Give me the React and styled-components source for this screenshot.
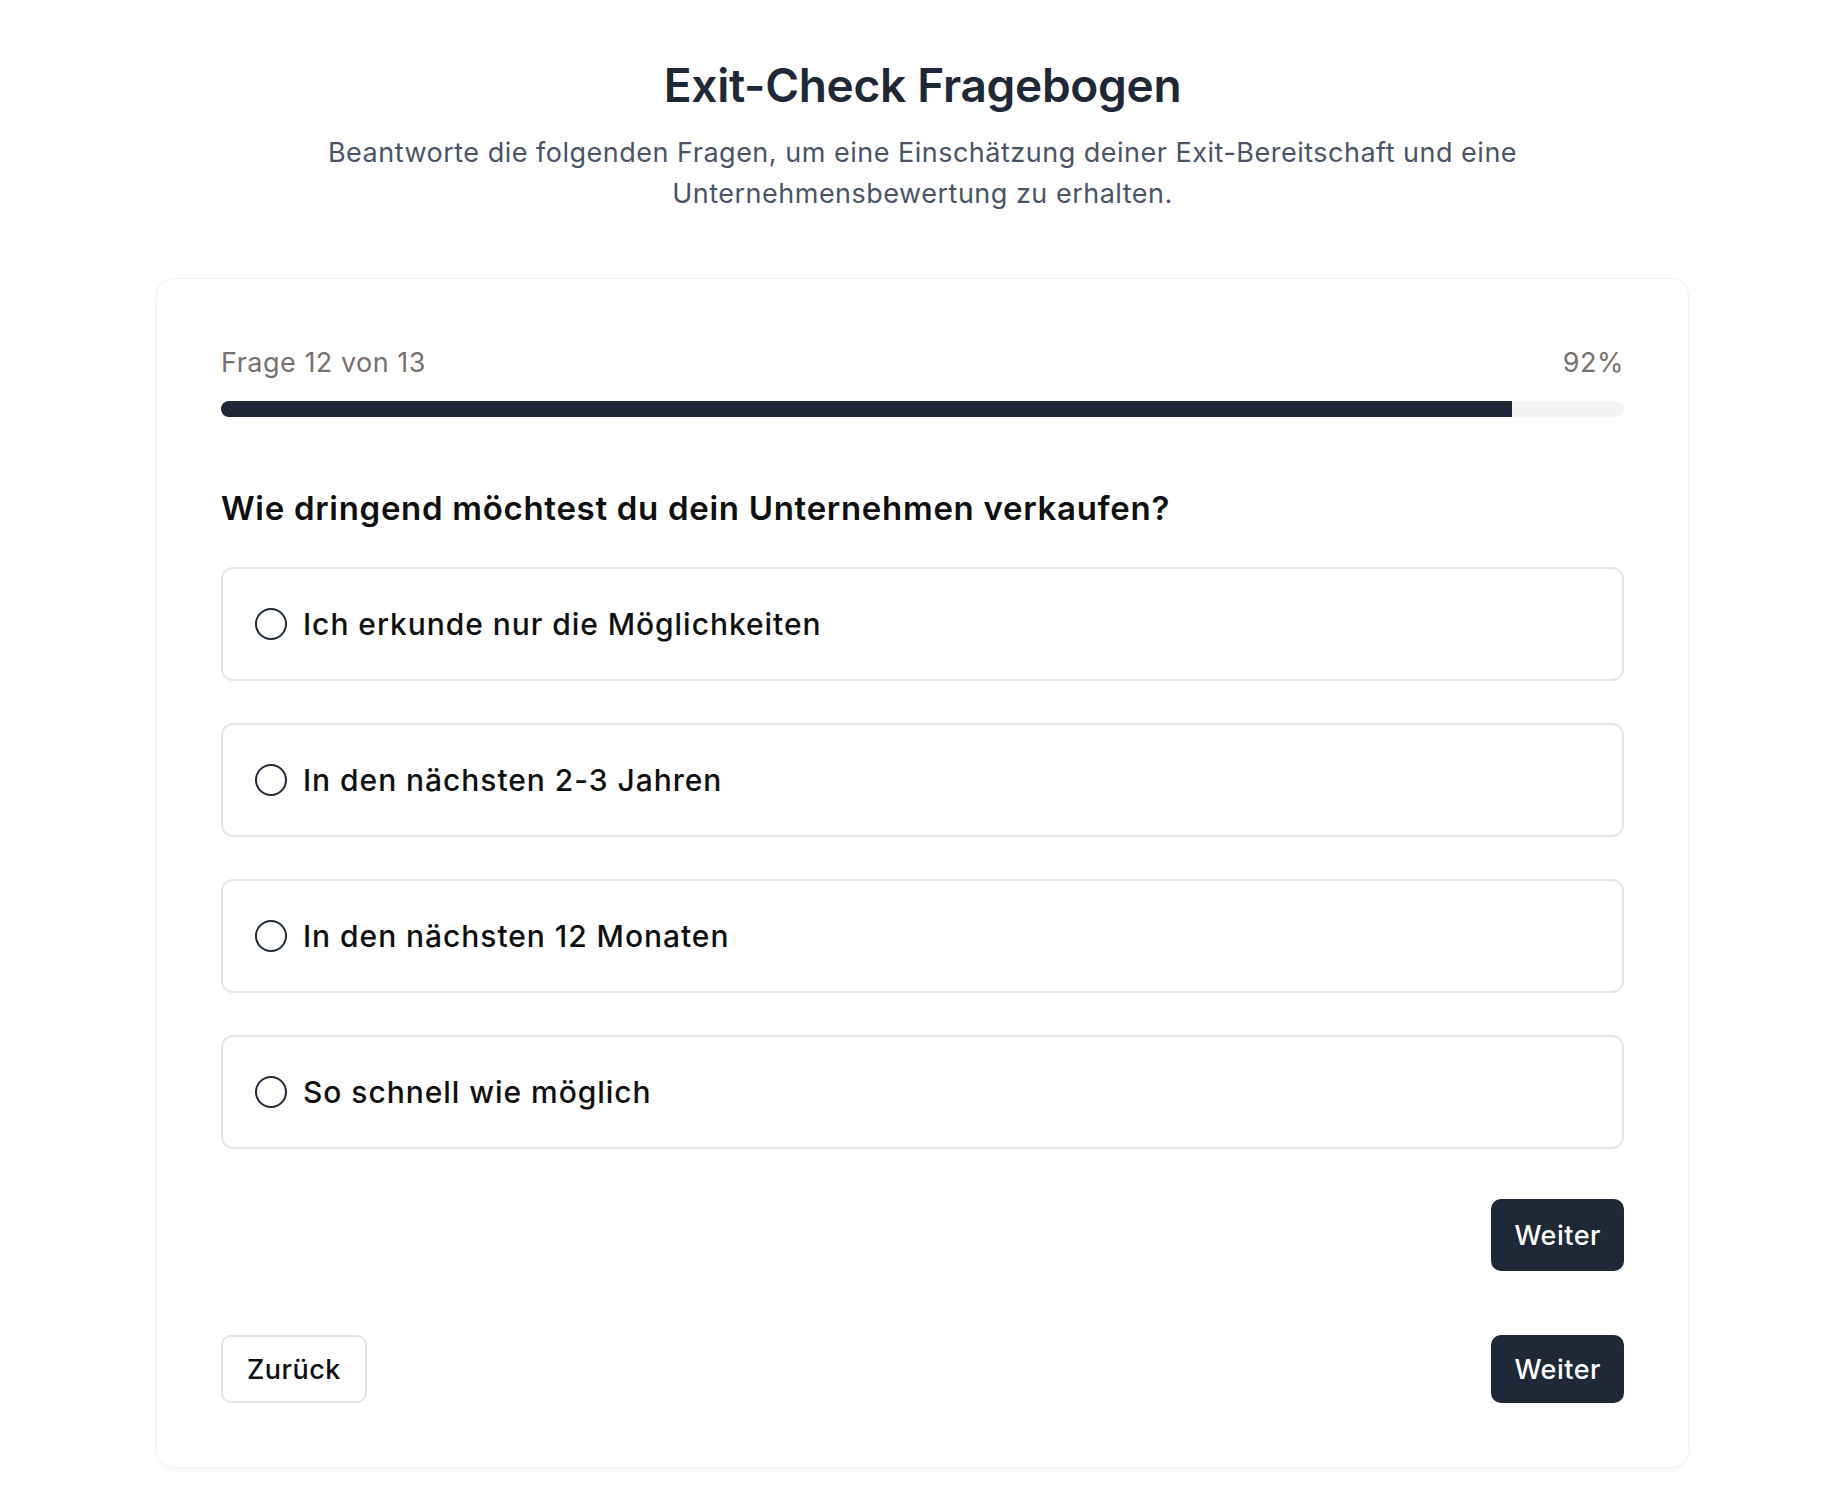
import React, { useState } from 'react';
import styled, { createGlobalStyle } from 'styled-components';

const GlobalStyle = createGlobalStyle`
  * { box-sizing: border-box; }
  body {
    margin: 0;
    background: #ffffff;
    font-family: Inter, "Noto Sans", "Liberation Sans", sans-serif;
    color: #0f0f0f;
  }
`;

const options = [
  'Ich erkunde nur die Möglichkeiten',
  'In den nächsten 2-3 Jahren',
  'In den nächsten 12 Monaten',
  'So schnell wie möglich',
];

const App = () => {
  const [selected, setSelected] = useState(null);
  const current = 12;
  const total = 13;
  const percent = Math.round((current / total) * 100);

  return (
    <Page>
      <GlobalStyle />
      <Header>
        <Title>Exit-Check Fragebogen</Title>
        <Subtitle>
          Beantworte die folgenden Fragen, um eine Einschätzung deiner Exit-Bereitschaft und eine
          <br />
          Unternehmensbewertung zu erhalten.
        </Subtitle>
      </Header>

      <Card>
        <ProgressInfo>
          <span>Frage {current} von {total}</span>
          <span>{percent}%</span>
        </ProgressInfo>
        <Track>
          <Fill style={{ width: `${percent}%` }} />
        </Track>

        <Question>Wie dringend möchtest du dein Unternehmen verkaufen?</Question>

        <OptionList>
          {options.map((opt, i) => (
            <Option key={opt} onClick={() => setSelected(i)}>
              <Radio $checked={selected === i} />
              <OptionText>{opt}</OptionText>
            </Option>
          ))}
        </OptionList>

        <InlineActions>
          <Button $primary $tall>Weiter</Button>
        </InlineActions>

        <Footer>
          <Button>Zurück</Button>
          <Button $primary>Weiter</Button>
        </Footer>
      </Card>
    </Page>
  );
};

const Page = styled.main`
  padding: 56px 133px 36px 156px;
`;

const Header = styled.header`
  text-align: center;
  margin-bottom: 64px;
`;

const Title = styled.h1`
  margin: 0 0 18px;
  font-size: 46px;
  line-height: 58px;
  font-weight: 600;
  color: #1e2837;
  letter-spacing: -0.3px;
`;

const Subtitle = styled.p`
  margin: 0;
  font-size: 27px;
  line-height: 41px;
  letter-spacing: 0.5px;
  color: #4a5468;
`;

const Card = styled.section`
  background: #fff;
  border: 1.5px solid #eef1f6;
  border-radius: 18px;
  box-shadow: 0 2px 4px rgba(15, 23, 42, 0.04);
  padding: 64px;
`;

const ProgressInfo = styled.div`
  display: flex;
  justify-content: space-between;
  align-items: center;
  font-size: 27px;
  line-height: 40px;
  letter-spacing: 0.5px;
  color: #78716c;
  margin-bottom: 18px;
`;

const Track = styled.div`
  height: 16px;
  border-radius: 999px;
  background: #f4f4f3;
  overflow: hidden;
`;

const Fill = styled.div`
  height: 100%;
  background: #1e2837;
`;

const Question = styled.h2`
  margin: 69px 0 37px;
  font-size: 33px;
  line-height: 44px;
  font-weight: 600;
  letter-spacing: 0.7px;
  color: #0f0f0f;
`;

const OptionList = styled.div`
  display: flex;
  flex-direction: column;
  gap: 42px;
`;

const Option = styled.label`
  display: flex;
  align-items: center;
  gap: 16px;
  height: 114px;
  padding: 0 32px;
  border: 2px solid #e6e6e6;
  border-radius: 12px;
  cursor: pointer;
`;

const Radio = styled.span`
  width: 32px;
  height: 32px;
  border-radius: 50%;
  border: 2px solid #1e2837;
  flex-shrink: 0;
  background: ${({ $checked }) => ($checked ? 'radial-gradient(circle, #1e2837 0 7px, #fff 8px)' : '#fff')};
`;

const OptionText = styled.span`
  font-size: 30px;
  font-weight: 500;
  letter-spacing: 0.95px;
  color: #0f0f0f;
`;

const InlineActions = styled.div`
  display: flex;
  justify-content: flex-end;
  margin-top: 50px;
`;

const Footer = styled.div`
  display: flex;
  justify-content: space-between;
  margin-top: 64px;
`;

const Button = styled.button`
  font-family: inherit;
  font-size: 27px;
  font-weight: 500;
  letter-spacing: 0.5px;
  height: ${({ $tall }) => ($tall ? '72px' : '68px')};
  padding: ${({ $primary }) => ($primary ? '0 21px' : '0 24px')};
  border-radius: 10px;
  cursor: pointer;
  border: ${({ $primary }) => ($primary ? '2px solid #1e2837' : '2px solid #e4e4e4')};
  background: ${({ $primary }) => ($primary ? '#1e2837' : '#fff')};
  color: ${({ $primary }) => ($primary ? '#ffffff' : '#0f0f0f')};
`;

export default App;
